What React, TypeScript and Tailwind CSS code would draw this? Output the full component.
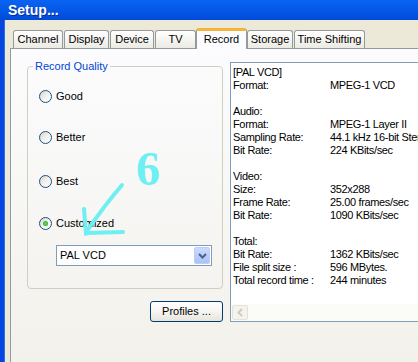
const tabs = [
  { label: 'Channel', w: 'w-[50px]', ml: 'ml-0' },
  { label: 'Display', w: 'w-[45px]', ml: 'ml-[1px]' },
  { label: 'Device', w: 'w-[44px]', ml: 'ml-[1px]' },
  { label: 'TV', w: 'w-[41px]', ml: 'ml-[1px]' },
  { label: 'Record', w: 'w-[51px]', ml: 'ml-0', active: true },
  { label: 'Storage', w: 'w-[46px]', ml: 'ml-0' },
  { label: 'Time Shifting', w: 'w-[71px]', ml: 'ml-[1px]' },
];

const info: [string, string][] = [
  ['[PAL VCD]', ''],
  ['Format:', 'MPEG-1 VCD'],
  ['', ''],
  ['Audio:', ''],
  ['Format:', 'MPEG-1 Layer II'],
  ['Sampling Rate:', '44.1 kHz 16-bit Stereo'],
  ['Bit Rate:', '224 KBits/sec'],
  ['', ''],
  ['Video:', ''],
  ['Size:', '352x288'],
  ['Frame Rate:', '25.00 frames/sec'],
  ['Bit Rate:', '1090 KBits/sec'],
  ['', ''],
  ['Total:', ''],
  ['Bit Rate:', '1362 KBits/sec'],
  ['File split size :', '596 MBytes.'],
  ['Total record time :', '244 minutes'],
];

function Radio({ label, checked, className }: { label: string; checked?: boolean; className: string }) {
  return (
    <div className={`flex items-center h-[13px] gap-[4px] ${className}`}>
      <span className="w-[13px] h-[13px] shrink-0 rounded-full border border-[#1c5180] bg-linear-to-br from-[#d6d4ca] via-[#f2f1ec] to-white flex items-center justify-center">
        {checked && <span className="w-[5px] h-[5px] rounded-full bg-radial from-[#5ee05a] to-[#1f9c1f]" />}
      </span>
      <span className="leading-[13px]">{label}</span>
    </div>
  );
}

export default function App() {
  return (
    <div className="relative w-[418px] h-[362px] overflow-hidden bg-[#ece9d8] font-['Liberation_Sans',Arial,sans-serif] text-[11px] text-black">
      {/* Title bar */}
      <div className="h-[20px] flex items-center pl-[8px] bg-linear-to-b from-[#0a63f2] via-[#0358e8] to-[#0349d8]">
        <span className="text-white font-bold text-[14px] leading-none [text-shadow:1px_1px_0_#0a2a9a]">Setup...</span>
      </div>

      <div className="flex h-[342px]">
        {/* window frame */}
        <div className="w-[5px] shrink-0 bg-[#0646e0] border-r border-[#2a6ff0]" />

        <div className="flex-1 min-w-0 flex flex-col pl-[5px] pt-[8px]">
          {/* Tabs */}
          <div className="flex items-end h-[20px] pl-[3px]">
            {tabs.map((t) =>
              t.active ? (
                <div
                  key={t.label}
                  className={`${t.w} ${t.ml} shrink-0 relative z-10 -mb-[1px] h-[21px] rounded-t-[3px] border-x border-[#919b9c] border-t-[3px] border-t-[#f5b33c] bg-[#fcfcfe] flex items-start justify-center pt-[2px] leading-[13px]`}
                >
                  {t.label}
                </div>
              ) : (
                <div
                  key={t.label}
                  className={`${t.w} ${t.ml} shrink-0 h-[18px] rounded-t-[3px] border border-b-0 border-[#919b9c] bg-linear-to-b from-white to-[#eceae3] flex items-center justify-center leading-[13px]`}
                >
                  {t.label}
                </div>
              ),
            )}
          </div>

          {/* Panel */}
          <div className="flex-1 flex items-start border-l border-t border-[#919b9c] bg-linear-to-b from-[#fcfcfe] to-[#f2f1eb] pl-[16px]">
            <div className="w-[196px] shrink-0 flex flex-col mt-[11px]">
              <fieldset className="h-[229px] border border-[#d0d0bf] rounded-[4px]">
                <legend className="ml-[5px] px-[2px] text-[#0046d5] leading-[13px]">Record Quality</legend>
                <div className="flex flex-col pl-[11px] pt-[17px]">
                  <Radio label="Good" className="mt-0" />
                  <Radio label="Better" className="mt-[28px]" />
                  <Radio label="Best" className="mt-[31px]" />
                  <Radio label="Customized" checked className="mt-[29px]" />
                  <div className="ml-[17px] mt-[15px] w-[156px] h-[21px] border border-[#7f9db9] bg-white flex items-center justify-between pl-[3px] pr-[1px]">
                    <span className="leading-[13px]">PAL VCD</span>
                    <span className="w-[16px] h-[17px] rounded-[2px] border border-[#bccdf6] bg-linear-to-b from-[#cbdaff] to-[#a9c2f8] flex items-center justify-center">
                      <svg width="9" height="6" viewBox="0 0 9 6">
                        <path d="M1 1 L4.5 4.5 L8 1" fill="none" stroke="#4d6185" strokeWidth="2" />
                      </svg>
                    </span>
                  </div>
                </div>
              </fieldset>
              <button className="self-end mt-[12px] w-[73px] h-[21px] rounded-[3px] border border-[#003c74] bg-linear-to-b from-white via-[#f6f5f1] to-[#e6e4dc] leading-[13px]">
                Profiles ...
              </button>
            </div>

            {/* Info box */}
            <div className="ml-[7px] mt-[13px] w-[200px] h-[260px] shrink-0 border border-[#7f9db9] bg-white flex flex-col">
              <div className="flex-1 pt-[3px] pl-[2px] text-[11px] tracking-[-0.35px]">
                {info.map(([k, v], i) => (
                  <div key={i} className="flex h-[13px] leading-[13px] whitespace-nowrap">
                    <span className="w-[97px] shrink-0">{k}</span>
                    <span>{v}</span>
                  </div>
                ))}
              </div>
              <div className="h-[17px] bg-[#fbfbf8] flex items-center pl-[1px]">
                <span className="w-[16px] h-[15px] rounded-[2px] border border-[#e4e2d8] bg-[#f4f3ee] flex items-center justify-center">
                  <svg width="6" height="9" viewBox="0 0 6 9">
                    <path d="M5 1 L1.5 4.5 L5 8" fill="none" stroke="#cdcac0" strokeWidth="2" />
                  </svg>
                </span>
              </div>
            </div>
          </div>
        </div>
      </div>

      {/* Annotation overlay */}
      <span className="absolute left-[136px] top-[145px] text-[48px] leading-none font-bold text-[#6ef0f2] font-['Liberation_Serif',serif] pointer-events-none">
        6
      </span>
      <svg className="absolute left-0 top-0 pointer-events-none" width="418" height="362">
        <g fill="none" stroke="#6ef0f2" strokeWidth="4" strokeLinecap="round" strokeLinejoin="round">
          <path d="M122 185 Q104 206 87 231" />
          <path d="M84 209 L86 234" />
          <path d="M86 233 L123 232" />
        </g>
      </svg>
    </div>
  );
}
